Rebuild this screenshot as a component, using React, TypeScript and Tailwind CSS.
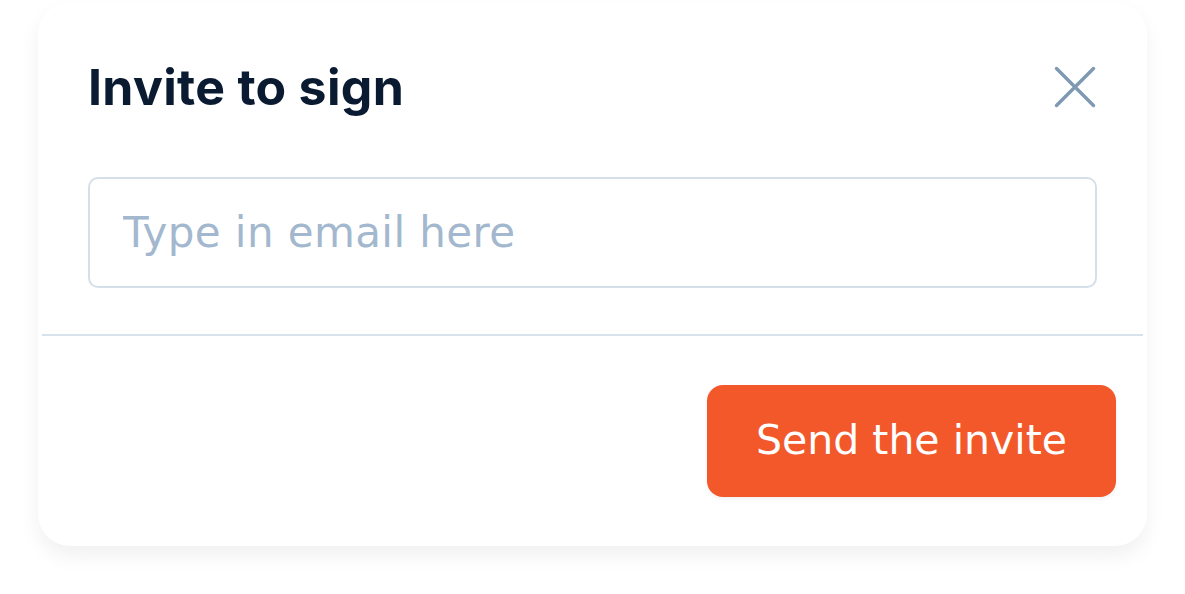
import { useState } from 'react'

function CloseIcon() {
  return (
    <svg width="44" height="44" viewBox="0 0 44 44" fill="none" aria-hidden="true">
      <path d="M3.5 3.5 L40.5 40.5 M40.5 3.5 L3.5 40.5" stroke="#7e99b1" strokeWidth="3.4" strokeLinecap="round" />
    </svg>
  )
}

export default function App() {
  const [email, setEmail] = useState('')

  return (
    <div className="w-full h-[594px] bg-white overflow-hidden">
      <div className="ml-[38px] mt-[2px] w-[1109px] h-[544px] rounded-[32px] bg-white shadow-[0_10px_20px_rgba(0,0,0,0.06)] flex flex-col">
        {/* header */}
        <div className="mt-[45px] h-[80px] px-[50px] flex items-center justify-between">
          <h2 className="font-['Inter',sans-serif] font-bold text-[50px] leading-none tracking-[0.3px] text-[#0a1a31]">
            Invite to sign
          </h2>
          <button type="button" className="flex items-center justify-center">
            <CloseIcon />
          </button>
        </div>

        {/* email field */}
        <div className="mt-[50px] px-[50px]">
          <input
            type="email"
            value={email}
            onChange={(e) => setEmail(e.target.value)}
            placeholder="Type in email here"
            className="w-full h-[111px] rounded-[10px] border-2 border-[#d5dfea] bg-white pl-[33px] pr-[33px] font-['DejaVu_Sans',sans-serif] text-[42px] tracking-[0.4px] text-[#0a1a31] placeholder:text-[#a3b8ce] focus:outline-none"
          />
        </div>

        <div className="mt-[46px] mx-[4px] h-[2px] bg-[#d7e2ec]" />

        {/* footer */}
        <div className="mt-[49px] pr-[31px] flex justify-end">
          <button
            type="button"
            className="w-[409px] h-[112px] rounded-[16px] bg-[#f3582b] flex items-center justify-center font-['DejaVu_Sans',sans-serif] text-[41px] text-white shadow-[0_2px_4px_rgba(0,0,0,0.06)]"
          >
            Send the invite
          </button>
        </div>
      </div>
    </div>
  )
}
